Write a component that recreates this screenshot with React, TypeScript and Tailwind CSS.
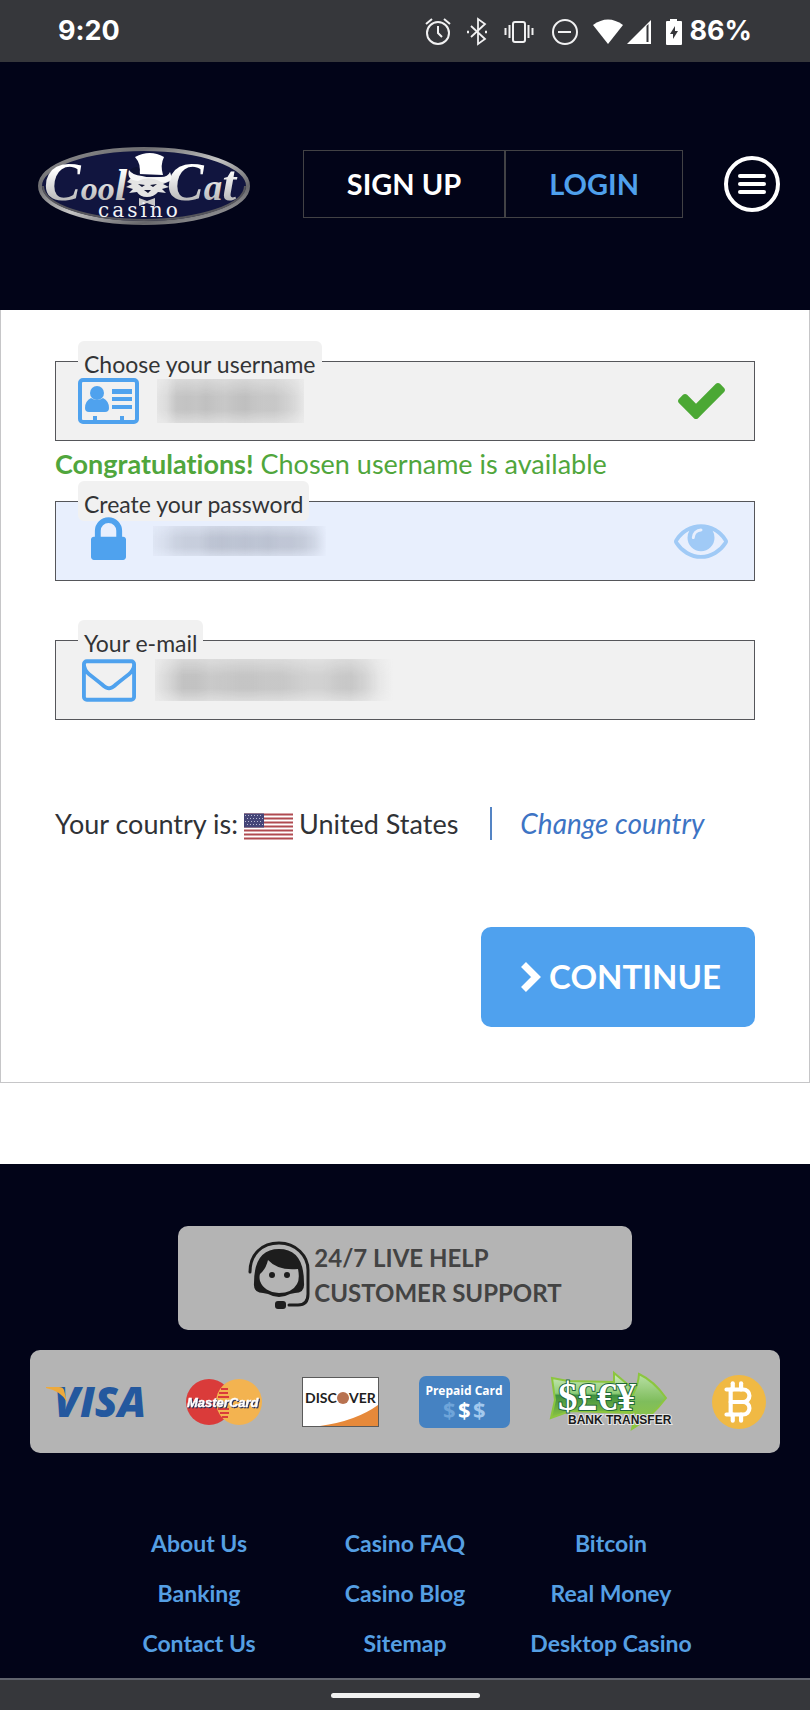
import { useState } from "react";
import type { ReactNode } from "react";
import { TbCurrencyBitcoin } from "react-icons/tb";

const FOOTER_LINKS = [
  "About Us", "Casino FAQ", "Bitcoin",
  "Banking", "Casino Blog", "Real Money",
  "Contact Us", "Sitemap", "Desktop Casino",
];

/* ── Status bar ── */
function StatusBar() {
  return (
    <div className="flex items-center justify-between h-[62px] bg-[#36373b] text-white pl-[58px] pr-[58px] font-['Inter',sans-serif] text-[27px] font-bold">
      <span>9:20</span>
      <div className="flex items-center">
        <svg viewBox="0 0 260 30" className="w-[260px] h-[30px]" fill="none" stroke="#f1f1f2" strokeWidth="2">
          {/* alarm */}
          <circle cx="13" cy="17" r="11" />
          <path d="M13 10v7l4 4M1 8l6-5M25 8l-6-5" />
          {/* bluetooth */}
          <path d="M46 10l14 13-7 5V3l7 5-14 13" strokeWidth="1.8" />
          <path d="M42 16h2M60 16h2" strokeWidth="2.4" />
          {/* vibrate */}
          <rect x="88" y="6" width="12" height="20" rx="2" />
          <path d="M84.500 9v13M80.500 12v7M103.500 9v13M107.500 12v7" strokeWidth="2" />
          {/* do not disturb */}
          <circle cx="140" cy="16" r="12" />
          <path d="M133 16h13" />
          {/* wifi */}
          <path d="M168 9q15-11 30 0L183 28z" fill="#fff" stroke="none" />
          {/* signal */}
          <path d="M202 28L226 4v24z" fill="#fff" stroke="none" />
          <path d="M221.500 10v16h2V8z" fill="#36373b" stroke="none" />
          {/* battery */}
          <path d="M241 6q0-1 1-1h3V3h7v2h4q1 0 1 1v22q0 1-1 1h-14q-1 0-1-1z" fill="#fff" stroke="none" />
          <path d="M250 10l-5 8h3v5l5-8h-3z" fill="#36373b" stroke="none" />
        </svg>
        <span className="ml-1">86%</span>
      </div>
    </div>
  );
}

function Logo() {
  return (
    <svg viewBox="0 0 212 82" className="w-[212px] h-[82px] shrink-0" role="img" aria-label="Cool Cat Casino">
      <defs>
        <linearGradient id="rim" x1="0" y1="0" x2="1" y2="1">
          <stop offset="0" stopColor="#9a9a9a" />
          <stop offset="0.25" stopColor="#6d6d70" />
          <stop offset="0.5" stopColor="#c4c4c4" />
          <stop offset="0.75" stopColor="#66666a" />
          <stop offset="1" stopColor="#b5b5b5" />
        </linearGradient>
        <linearGradient id="silver" x1="0" y1="0" x2="0" y2="1">
          <stop offset="0.3" stopColor="#ffffff" />
          <stop offset="0.85" stopColor="#b4b4b4" />
        </linearGradient>
      </defs>
      <ellipse cx="106" cy="43" rx="104" ry="37" fill="#11153f" stroke="url(#rim)" strokeWidth="4" />
      <path d="M5 43a101 34 0 0 0 202 0" fill="none" stroke="#55555b" strokeWidth="2" />
      <g fill="url(#silver)" fontFamily="'Liberation Serif', serif" fontStyle="italic" fontWeight="700">
        <text x="6" y="57">
          <tspan fontSize="55">C</tspan><tspan fontSize="34">oo</tspan><tspan fontSize="45">l</tspan>
        </text>
        <text x="129" y="57">
          <tspan fontSize="55">C</tspan><tspan fontSize="37">a</tspan><tspan fontSize="50">t</tspan>
        </text>
      </g>
      {/* cat */}
      <path d="M94 34L89 39 94 41 88 44 95 46 91 50 99 49Q102 54 109 54 116 54 120 49L128 50 124 46 131 44 125 41 130 39 125 34z" fill="#e4e4e4" />
      <path d="M97 14q15-8 29 0-4 8-1 18l-24-1q3-9-4-17z" fill="#fff" />
      <path d="M91 27q-3 10 9 11 11-6 23 1 14 2 9-10-2 5-9 5-10 2-19-1-10-1-13-6z" fill="#f7f7f7" />
      <path d="M92 27q6-5 9-2l1 6q-6 1-10-4z" fill="#0e1233" />
      <path d="M100 41l7 1-3 2zM119 41l-7 1 3 2zM106 47h7l-3 3z" fill="#111433" />
      <path d="M101 55l8 3 8-3v8l-8-3-8 3z" fill="#c9c9c9" />
      <text x="60" y="74" fontSize="20" letterSpacing="3" fill="#f3f3f6" fontFamily="'DejaVu Serif', serif">casino</text>
    </svg>
  );
}

function Header() {
  return (
    <header className="flex items-center bg-[#020418] pt-[81px] pb-[85px] pl-[38px] pr-[30px]">
      <a href="#home"><Logo /></a>
      <nav className="flex ml-auto mr-[41px] text-[29px] leading-[66px] font-bold">
        <a href="#signup" className="px-[43px] border border-[#424245] text-white">SIGN UP</a>
        <a href="#login" className="px-[43px] border border-[#424245] text-[#4fa0ec]">LOGIN</a>
      </nav>
      <button aria-label="Menu" className="w-14 h-14 rounded-full border-4 border-white flex flex-col items-center justify-center gap-1">
        <span className="w-7 h-1 rounded bg-white" />
        <span className="w-7 h-1 rounded bg-white" />
        <span className="w-7 h-1 rounded bg-white" />
      </button>
    </header>
  );
}

/* ── Field icons ── */
function CardIcon() {
  return (
    <svg viewBox="0 0 61 46" className="w-[61px] h-[46px]" fill="#4fa2ee">
      <rect x="2" y="2" width="57" height="42" rx="3" fill="none" stroke="#4fa2ee" strokeWidth="4" />
      <circle cx="19" cy="15" r="7" />
      <path d="M13 20q6 4 12 0 6 3 6 10 0 4-4 4H11q-4 0-4-4 0-7 6-10z" />
      <path d="M34 11h20v5H34zM34 19h20v4H34zM34 27h20v4H34zM15 38h4v6h-4zM42 38h4v6h-4z" />
    </svg>
  );
}

function LockIcon() {
  return (
    <svg viewBox="320 128 1152 1600" className="w-[35px] h-[49px]" fill="#4fa2ee">
      <path d="M640 768h512v-192q0-106-75-181t-181-75-181 75-75 181v192zm832 96v576q0 40-28 68t-68 28h-960q-40 0-68-28t-28-68v-576q0-40 28-68t68-28h32v-192q0-184 132-316t316-132 316 132 132 316v192h32q40 0 68 28t28 68z" />
    </svg>
  );
}

function EnvelopeIcon() {
  return (
    <svg viewBox="0 256 1792 1408" className="w-[54px] h-[43px]" fill="#4fa2ee">
      <path d="M1664 1504v-768q-32 36-69 66-268 206-426 338-51 43-83 67t-86.500 48.500-102.500 24.500h-2q-48 0-102.500-24.500t-86.500-48.500-83-67q-158-132-426-338-37-30-69-66v768q0 13 9.500 22.500t22.500 9.500h1472q13 0 22.500-9.500t9.500-22.500zm0-1051v-24.500l-.5-13-3-12.500-5.500-9-9-7.500-14-2.500h-1472q-13 0-22.500 9.500t-9.500 22.500q0 168 147 284 193 152 401 317 6 5 35 29.500t46 37.500 44.500 31.500 50.500 27.500 43 9h2q20 0 43-9t50.500-27.500 44.500-31.500 46-37.500 35-29.500q208-165 401-317 54-43 100.500-115.500t46.500-131.500zm128-37v1088q0 66-47 113t-113 47h-1472q-66 0-113-47t-47-113v-1088q0-66 47-113t113-47h1472q66 0 113 47t47 113z" />
    </svg>
  );
}

function CheckIcon() {
  return (
    <svg viewBox="121 334 1550 1188" className="w-[47px] h-9" fill="#4ba834">
      <path d="M1671 566q0 40-28 68l-724 724-136 136q-28 28-68 28t-68-28l-136-136-362-362q-28-28-28-68t28-68l136-136q28-28 68-28t68 28l294 295 656-657q28-28 68-28t68 28l136 136q28 28 28 68z" />
    </svg>
  );
}

function EyeIcon() {
  return (
    <svg viewBox="0 384 1792 1152" className="w-[54px] h-[35px]" fill="#a0caf6">
      <path d="M1664 960q-152-236-381-353 61 104 61 225 0 185-131.500 316.500t-316.500 131.500-316.500-131.500-131.500-316.500q0-121 61-225-229 117-381 353 133 205 333.500 326.500t434.500 121.500 434.500-121.500 333.500-326.500zm-720-384q0-20-14-34t-34-14q-125 0-214.500 89.500t-89.500 214.500q0 20 14 34t34 14 34-14 14-34q0-86 61-147t147-61q20 0 34-14t14-34zm848 384q0 34-20 69-140 230-376.500 368.500t-499.500 138.500-499.500-139-376.500-368q-20-35-20-69t20-69q140-229 376.500-368t499.500-139 499.500 139 376.500 368q20 35 20 69z" />
    </svg>
  );
}

/* Smudged value: vertical bands of uneven grey, faded at the top and bottom */
function Smudge({ id, bands, color, className }: { id: string; bands: number[]; color: string; className: string }) {
  return (
    <svg viewBox="0 0 100 40" preserveAspectRatio="none" className={className} aria-hidden="true">
      <defs>
        <linearGradient id={id}>
          {bands.map((b, i) => (
            <stop key={i} offset={i / (bands.length - 1)} stopColor={color} stopOpacity={b / 100} />
          ))}
        </linearGradient>
        <linearGradient id={`${id}-fade`} x1="0" y1="0" x2="0" y2="1">
          <stop offset="0" stopColor="#888" />
          <stop offset="0.4" stopColor="#fff" />
          <stop offset="0.7" stopColor="#fff" />
          <stop offset="1" stopColor="#777" />
        </linearGradient>
        <mask id={`${id}-mask`}>
          <rect width="100" height="40" fill={`url(#${id}-fade)`} />
        </mask>
      </defs>
      <rect width="100" height="40" fill={`url(#${id})`} mask={`url(#${id}-mask)`} />
    </svg>
  );
}

interface FieldProps {
  id: string;
  label: string;
  type: string;
  inputClass: string;
  icon: ReactNode;
  smudge: ReactNode;
  trailing?: ReactNode;
}

function Field({ id, label, type, inputClass, icon, smudge, trailing }: FieldProps) {
  return (
    <div className="relative">
      <input id={id} type={type} className={`block w-full h-20 border border-[#55565a] pl-[100px] pr-20 text-[27px] outline-none ${inputClass}`} />
      <label htmlFor={id} className="absolute -top-5 left-[23px] h-10 px-[6px] pt-[7px] rounded-md bg-[#f1f1f1] text-[23px] leading-8 text-[#333436]">
        {label}
      </label>
      <div className="absolute inset-y-0 left-[23px] right-[22px] flex items-center pointer-events-none">
        <div className="w-[61px] flex justify-center">{icon}</div>
        {smudge}
        <div className="ml-auto w-16 flex justify-center pointer-events-auto">{trailing}</div>
      </div>
    </div>
  );
}

function UsFlag() {
  return (
    <svg viewBox="0 0 49 26" className="w-[49px] h-[27px] mx-[6px] self-end" role="img" aria-label="United States flag">
      <rect width="49" height="26" fill="#fff" />
      {[0, 4, 8, 12, 16, 20, 24].map((y) => (
        <rect key={y} y={y} width="49" height="2" fill="#b04a50" />
      ))}
      <rect width="20" height="14" fill="#454578" />
      <path d="M1 2h18M3 5h16M1 8h18M3 11h16" stroke="#b9b9d2" strokeWidth="1" strokeDasharray="1 2" />
    </svg>
  );
}

function SignupForm() {
  const [show, setShow] = useState(false);
  return (
    <form className="bg-white border-x border-b border-[#c6c6c8] px-[54px] pt-[51px] pb-[55px]" onSubmit={(e) => e.preventDefault()}>
      <Field
        id="username"
        label="Choose your username"
        type="text"
        inputClass="bg-[#f1f1f1]"
        icon={<CardIcon />}
        smudge={<Smudge id="s1" color="#777" bands={[10, 18, 36, 38, 36, 40, 36, 34, 38, 40, 36, 34, 34, 28, 20, 8]} className="w-[147px] h-11 ml-[18px]" />}
        trailing={<CheckIcon />}
      />
      <p className="text-[27px] leading-[46px] mb-[14px] text-[#50a63c]">
        <strong className="font-bold">Congratulations!</strong> Chosen username is available
      </p>
      <Field
        id="password"
        label="Create your password"
        type={show ? "text" : "password"}
        inputClass="bg-[#e8effd]"
        icon={<LockIcon />}
        smudge={<Smudge id="s2" color="#73798a" bands={[8, 14, 24, 28, 28, 36, 38, 36, 38, 36, 38, 34, 34, 30, 20, 2]} className="w-[173px] h-[30px] ml-[14px]" />}
        trailing={
          <button type="button" aria-label="Show password" onClick={() => setShow((s) => !s)}>
            <EyeIcon />
          </button>
        }
      />
      <div className="mt-[59px]">
        <Field
          id="email"
          label="Your e-mail"
          type="email"
          inputClass="bg-[#f1f1f1]"
          icon={<EnvelopeIcon />}
          smudge={<Smudge id="s3" color="#777" bands={[8, 22, 38, 38, 32, 34, 36, 36, 34, 34, 30, 26, 26, 32, 34, 24, 8, 0]} className="w-[238px] h-[42px] ml-4" />}
        />
      </div>

      <div className="mt-[87px] flex items-center text-[27px] leading-[33px] text-[#303236]">
        <span>Your country is:</span>
        <UsFlag />
        <span>United States</span>
        <a href="#country" className="ml-8 pl-7 border-l-2 border-[#5484c4] italic text-[28px] text-[#3d74c4]">Change country</a>
      </div>

      <div className="mt-[87px] flex justify-end">
        <button type="submit" className="flex items-center gap-2 h-[100px] pl-10 pr-[34px] rounded-[10px] bg-[#4fa1ee] text-white text-[33px] font-bold">
          <svg viewBox="0 0 20 30" className="w-5 h-[30px]" fill="none" stroke="#fff" strokeWidth="7">
            <path d="M2.500 2.500L15 15 2.500 27.500" />
          </svg>
          CONTINUE
        </button>
      </div>
    </form>
  );
}

function SupportIcon() {
  return (
    <svg viewBox="0 0 62 68" className="w-[62px] h-[68px]" fill="#1d1d1d">
      <path d="M2 31C2 13 14 2 31 2s29 13 29 27v24q0 11-10 11h-9" fill="none" stroke="#1d1d1d" strokeWidth="3" strokeLinecap="round" />
      <path d="M6 42Q6 8 31 8t25 34q1 10-9 10l-5 1q-11 6-22 0l-5-1Q5 52 6 42z" />
      <path d="M20 19q10 11 30 9 2 10-1 15-5 9-18 9-15-1-19-12-1-4 0-7 6-5 8-14z" fill="#b4b4b4" />
      <circle cx="24" cy="34" r="3" />
      <circle cx="39" cy="34" r="3" />
      <rect x="27" y="60" width="11" height="8" rx="3" />
    </svg>
  );
}

/* ── Payment logos ── */
function Visa() {
  return (
    <svg viewBox="0 0 99 46" className="w-[99px] h-[46px] overflow-visible" role="img" aria-label="Visa">
      <text x="8" y="38" fontSize="42" fontWeight="800" fontStyle="italic" fontFamily="'Open Sans', sans-serif" fill="#24589e">VISA</text>
      <path d="M0 8h13q4 0 5 3l3 12Q15 12 0 9z" fill="#eda93c" />
    </svg>
  );
}

function MasterCard() {
  return (
    <svg viewBox="0 0 77 48" className="w-[77px] h-12 overflow-visible" role="img" aria-label="MasterCard">
      <circle cx="24" cy="24" r="23" fill="#da3b3a" />
      <circle cx="54" cy="24" r="23" fill="#f3b350" />
      <path d="M36 11h7M34 15h9M33 19h11M33 31h11M35 35h9M37 39h6" stroke="#da3b3a" strokeWidth="2" />
      <text x="2" y="29" fontSize="13" fontWeight="700" fontStyle="italic" fontFamily="'Liberation Sans', sans-serif" fill="#fff" stroke="#fff" strokeWidth="0.4" className="drop-shadow-[1px_1px_0_#262c54]">
        MasterCard
      </text>
    </svg>
  );
}

function Discover() {
  return (
    <svg viewBox="0 0 77 50" className="w-[77px] h-[50px]" role="img" aria-label="Discover">
      <rect x="0.500" y="0.500" width="76" height="49" fill="#fff" stroke="#5a5a5a" />
      <path d="M18 49Q54 44 76 28v21z" fill="#e6893a" />
      <g fontSize="14" fontWeight="700" fontFamily="Lato, sans-serif" fill="#1e1e1e">
        <text x="3" y="26">DISC</text>
        <text x="47" y="26">VER</text>
      </g>
      <circle cx="41" cy="21" r="6" fill="#b87250" />
    </svg>
  );
}

function PrepaidCard() {
  return (
    <svg viewBox="0 0 91 52" className="w-[91px] h-[52px]" role="img" aria-label="Prepaid Card">
      <rect width="91" height="52" rx="7" fill="#4582c2" />
      <g fontWeight="700" fontFamily="'Open Sans', sans-serif" fill="#fff">
        <text x="45" y="19" fontSize="12" textAnchor="middle">Prepaid Card</text>
        <text x="24" y="42" fontSize="22" fill="#6fa5da">$</text>
        <text x="39" y="42" fontSize="22">$</text>
        <text x="54" y="42" fontSize="22" fill="#a3c9ee">$</text>
      </g>
    </svg>
  );
}

function BankTransfer() {
  return (
    <svg viewBox="0 0 122 58" className="w-[122px] h-[58px] overflow-visible" role="img" aria-label="Bank Transfer">
      <defs>
        <linearGradient id="arrow" x1="0" y1="0" x2="0" y2="1">
          <stop offset="0" stopColor="#d3ebc0" />
          <stop offset="0.45" stopColor="#8fce78" />
          <stop offset="0.5" stopColor="#3f9141" />
          <stop offset="1" stopColor="#8dc443" />
        </linearGradient>
        <linearGradient id="head" x1="0" y1="0" x2="0" y2="1">
          <stop offset="0" stopColor="#b9e0a6" />
          <stop offset="0.5" stopColor="#7fbd5c" />
          <stop offset="1" stopColor="#92c83f" />
        </linearGradient>
      </defs>
      <path d="M2 5l16 3 46 1V0l24 20-6 20-62-2-19 7 4-18z" fill="url(#arrow)" stroke="#8cc63f" strokeWidth="2" />
      <path d="M89 1q15 7 27 24-15 20-34 31l4-17-16-1q18-18 19-37z" fill="url(#head)" stroke="#8cc63f" strokeWidth="2" />
      <text x="8" y="37" fontSize="39" fontWeight="700" fontFamily="'Liberation Serif', serif" fill="#fff" stroke="#21683a" strokeWidth="2" paintOrder="stroke">$£€¥</text>
      <text x="18" y="51" fontSize="12" fontWeight="700" fontFamily="'Liberation Sans', sans-serif" fill="#1b1b1b" stroke="#e6e6e6" strokeWidth="2" paintOrder="stroke">BANK TRANSFER</text>
    </svg>
  );
}

function Footer() {
  return (
    <footer className="bg-[#020418] pt-[62px] pb-[10px]">
      <a href="#support" className="flex w-[56%] h-[104px] mx-auto items-center justify-center gap-1 pb-[6px] rounded-[10px] bg-[#b4b4b4] text-[24px] leading-[35px] font-bold text-[#434343]">
        <SupportIcon />
        <span>24/7 LIVE HELP<br />CUSTOMER SUPPORT</span>
      </a>
      <div className="flex items-center justify-between mt-5 mx-[30px] h-[103px] pl-4 pr-[14px] rounded-[10px] bg-[#b4b4b4]">
        <Visa />
        <MasterCard />
        <Discover />
        <PrepaidCard />
        <BankTransfer />
        <span className="flex w-[54px] h-[54px] items-center justify-center rounded-full bg-[#f0b944] text-white">
          <TbCurrencyBitcoin size={50} aria-label="Bitcoin" />
        </span>
      </div>
      <nav className="grid grid-cols-3 mt-[65px] px-24 text-center text-[23px] leading-[50px] font-bold text-[#559fe3]">
        {FOOTER_LINKS.map((text) => (
          <a key={text} href="#info" className="whitespace-nowrap">{text}</a>
        ))}
      </nav>
    </footer>
  );
}

export default function App() {
  return (
    <div className="bg-white font-['Lato',sans-serif] [font-variant-ligatures:none]">
      <StatusBar />
      <Header />
      <main className="pb-[81px]">
        <SignupForm />
      </main>
      <Footer />
      <div className="h-[33px] bg-[#36373b] border-t-2 border-[#60646d] flex items-center justify-center">
        <div className="w-[149px] h-[5px] rounded-full bg-[#f1f1f1]" />
      </div>
    </div>
  );
}
